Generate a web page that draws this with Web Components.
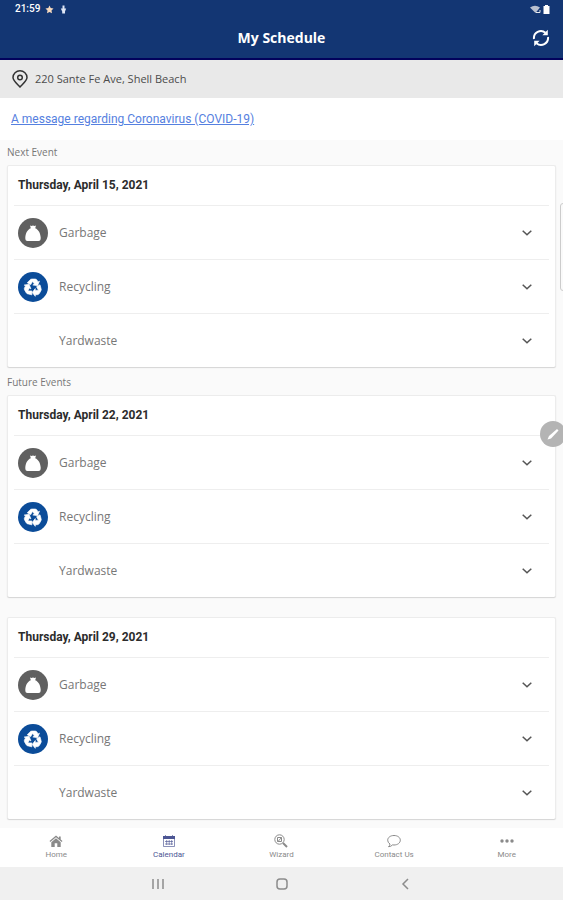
<!DOCTYPE html>
<html lang="en">
<head>
<meta charset="utf-8">
<title>My Schedule</title>
<style>
html,body{margin:0;height:100%}
body{font-family:"Open Sans","Noto Sans",sans-serif;background:#fafafa;color:#777}
</style>
</head>
<body>
<schedule-app></schedule-app>
<script>
const define = (name, html, setup) => customElements.define(name, class extends HTMLElement {
  connectedCallback() {
    if (this.shadowRoot) return;
    const root = this.attachShadow({ mode: 'open' });
    const t = document.createElement('template');
    t.innerHTML = html;
    root.append(t.content.cloneNode(true));
    if (setup) setup.call(this, root);
  }
});

const arrow = 'M11.700 8.200q.8-1.200 2.200-1.200h3.200q1.300 0 2 1.200l1 1.700 1.400-.8-1.800 4.600-4.900-.7 1.600-.9-1.800-2.700-2 3.400-3.400-2z';
const icons = {
  garbage: `<svg viewBox="0 0 30 30"><circle cx="15" cy="15" r="15" fill="#606060"/><path fill="#fff" d="M12 7.600q1.500.7 3 0 1.500.7 3 0l-.8 2.600c3.400 1.300 5.200 5 5.500 9.300q.2 3.500-2.200 3.500h-11q-2.400 0-2.200-3.500c.3-4.300 2.100-8 5.500-9.300z"/></svg>`,
  recycling: `<svg viewBox="0 0 30 30"><circle cx="15" cy="15" r="15" fill="#0b4c99"/><g fill="#fff" stroke="#fff" stroke-width=".6">${[0, 120, 240].map(a => `<path transform="rotate(${a} 15 15.500)" d="${arrow}"/>`).join('')}</g></svg>`,
  home: `<svg viewBox="0 0 14 14"><path fill="currentColor" d="M7 1.500 10 4V2.500h1.700v3L13.500 7l-.8.900L7 3.200 1.300 7.900.5 7zM7 4.300l4.700 3.900V13H8.300V9.300H5.700V13H2.300V8.200z"/></svg>`,
  calendar: `<svg viewBox="0 0 14 14"><path fill="currentColor" d="M1 2h12v3H1z"/><path fill="none" stroke="currentColor" stroke-opacity=".65" d="M1.500 4.500v8h11v-8M3.500 1v2M10.500 1v2M3 7.500h8M3 10h8M4.700 6v5M7.200 6v5M9.700 6v5"/></svg>`,
  wizard: `<svg viewBox="0 0 14 14"><g fill="none" stroke="currentColor"><circle cx="5.500" cy="5.500" r="4.700"/><path d="M3.500 3.500h4v4h-4zM4 7.500l3.500-4"/><path stroke-width="2" d="m9 9 4 4"/></g></svg>`,
  contact: `<svg viewBox="0 0 14 14"><path fill="none" stroke="currentColor" d="M7 1.500c3.600 0 6.300 2 6.300 4.700S10.600 11 7 11l-1.500-.1Q4 12.700 1.500 12.700 3 11.500 3 10 .7 8.700.7 6.200C.7 3.500 3.400 1.500 7 1.500z"/></svg>`,
  more: `<svg viewBox="0 0 14 14"><g fill="currentColor"><circle cx="2" cy="7" r="1.700"/><circle cx="7" cy="7" r="1.700"/><circle cx="12" cy="7" r="1.700"/></g></svg>`
};

define('status-bar', `<style>
:host{display:flex;align-items:center;height:18px;padding:0 13px 0 15px;color:#fff;font:500 10px/18px Roboto,sans-serif}
svg{height:9px;display:block}.star{margin-left:5px}.mic{margin-left:5px}.wifi{margin-left:auto}.bat{margin-left:2px}
</style><span>21:59</span>
<svg class="star" viewBox="0 0 9 9" width="9"><path fill="#f7d9bd" d="m4.500.5 1.200 2.600 2.800.3-2 2 .5 2.900-2.500-1.400L2 8.300l.5-2.900-2-2 2.800-.3z"/></svg>
<svg class="mic" viewBox="0 0 9 9" width="9"><path fill="#dfe6f5" d="M3.500.5h2v3h1.700L6 6.500v2H3.200v-2L1.800 3.500h1.700z"/></svg>
<svg class="wifi" viewBox="0 0 11 9" width="11"><path fill="#b9c0cf" d="M0 2.500Q5-1 10 2.500L5.500 8z"/><path fill="none" stroke="#e5e8ef" d="M6 7.500h4V5"/></svg>
<svg class="bat" viewBox="0 0 7 9" width="7"><path fill="#fff" d="M2 0h3v1h1.500v8h-6V1H2z"/></svg>`);

define('app-header', `<style>
:host{display:block;background:#133673;border-bottom:2px solid #02025c;color:#fff}
.bar{display:grid;grid-template-columns:1fr auto 1fr;align-items:center;height:40px;padding:0 13px}
h1{grid-column:2;margin:0;font-size:14px;line-height:20px;font-weight:700}
button{justify-self:end;display:block;border:0;padding:0;background:none;color:#fff}svg{display:block}
</style><status-bar></status-bar><div class="bar"><h1><slot></slot></h1>
<button aria-label="Refresh"><svg width="18" height="18" viewBox="0 0 18 18"><g fill="none" stroke="#fff" stroke-width="2"><path d="M2 10a7 7 0 0 1 11.500-6.200M16 8A7 7 0 0 1 4.500 14.200"/></g><path fill="#fff" d="M15.800.8v5.400h-5.400zM2.200 17.200v-5.400h5.400z"/></svg></button></div>`);

define('address-bar', `<style>
:host{display:flex;align-items:center;gap:7px;height:38px;padding:0 12px;background:#e9e9e9;color:#4c4c4c;font-size:11px;line-height:16px}
svg{display:block}
</style><svg width="16" height="18" viewBox="0 0 16 18"><g fill="none" stroke="#333" stroke-width="1.500"><path d="M8 17C4 12.800 1 10.500 1 7.500a7 6.700 0 0 1 14 0C15 10.500 12 12.800 8 17z"/><circle cx="8" cy="7.500" r="2.300"/></g></svg><span><slot></slot></span>`);

define('notice-bar', `<style>
:host{display:flex;align-items:center;height:42px;padding:0 11px;background:#fff}
a{color:#5580e0;font:12px/16px Roboto,sans-serif;text-decoration:underline}
</style><a href="#covid"><slot></slot></a>`);

define('event-row', `<style>
:host{display:block;border-top:1px solid #eee;margin:0 6px}
button{width:100%;height:53px;display:grid;grid-template-columns:30px 1fr 10px;gap:11px;align-items:center;border:0;background:none;padding:0 17px 0 4px;color:#777;font:12px/16px "Open Sans",sans-serif;text-align:left}
svg{display:block}i{display:block;width:30px;height:30px}
</style><button aria-expanded="false"><i></i><span><slot></slot></span><svg width="10" height="6" viewBox="0 0 10 6"><path fill="none" stroke="#555" stroke-width="1.500" d="m.7.700 4.300 4.100L9.300.7"/></svg></button>`,
function (root) { root.querySelector('i').innerHTML = icons[this.getAttribute('icon')] || ''; });

define('event-card', `<style>
:host{display:block;background:#fff;border:1px solid #ececec;border-bottom:0;border-radius:2px;box-shadow:0 1px 1px #d4d4d4}
h3{margin:0;padding:0 10px;font:700 12px/39px Roboto,sans-serif;color:#2c2c2c}
</style><h3></h3><event-row icon="garbage">Garbage</event-row><event-row icon="recycling">Recycling</event-row><event-row>Yardwaste</event-row>`,
function (root) { root.querySelector('h3').textContent = this.getAttribute('date'); });

define('event-section', `<style>
:host{display:block}
h2{margin:0;font-size:10px;font-weight:400;line-height:25px;color:#777}
div{display:grid;gap:20px}
</style><h2></h2><div><slot></slot></div>`,
function (root) { root.querySelector('h2').textContent = this.getAttribute('label'); });

define('nav-tab', `<style>
:host{flex:1;display:block;color:#8a8a8a}:host([active]){color:#4d5694}
a{display:grid;justify-items:center;gap:2px;color:inherit;text-decoration:none;font:8px/10px Roboto,sans-serif}
i{display:block;width:14px;height:14px}svg{display:block}
</style><a href="#tab"><i></i><span><slot></slot></span></a>`,
function (root) { root.querySelector('i').innerHTML = icons[this.getAttribute('icon')]; });

define('tab-bar', `<style>:host{display:block;background:#fff}nav{display:flex;padding:6px 0 7px}</style><nav>
<nav-tab icon="home">Home</nav-tab><nav-tab icon="calendar" active>Calendar</nav-tab><nav-tab icon="wizard">Wizard</nav-tab><nav-tab icon="contact">Contact Us</nav-tab><nav-tab icon="more">More</nav-tab></nav>`);

define('system-bar', `<style>
:host{display:flex;justify-content:center;gap:110px;background:#f0f0f0;padding:10px 0 9px}
button{display:block;border:0;padding:0;background:none}svg{display:block}g{fill:none;stroke:#8c8c8c;stroke-width:1.500}
</style><button aria-label="Recent apps"><svg width="14" height="14"><g><path d="M2 2v10M7 2v10M12 2v10"/></g></svg></button>
<button aria-label="Home screen"><svg width="14" height="14"><g><rect x="2" y="2" width="10" height="10" rx="3"/></g></svg></button>
<button aria-label="Back"><svg width="14" height="14"><g><path d="M9 2 4 7l5 5"/></g></svg></button>`);

define('schedule-app', `<style>
:host{display:flex;flex-direction:column;min-height:100vh;position:relative;overflow:hidden}
main{flex:1;display:grid;align-content:start;gap:3px;padding:0 7px 8px}
.handle{position:absolute;right:-5px;top:203px;width:8px;height:88px;box-sizing:border-box;border:1px solid #ccc;border-radius:3px;background:#fafafa}
.edit{position:absolute;right:-3px;top:421px;width:26px;height:26px;border:0;border-radius:50%;padding:0;background:#b4b4b4;display:grid;place-items:center}
</style>
<app-header>My Schedule</app-header>
<address-bar>220 Sante Fe Ave, Shell Beach</address-bar>
<notice-bar>A message regarding Coronavirus (COVID-19)</notice-bar>
<main>
<event-section label="Next Event"><event-card date="Thursday, April 15, 2021"></event-card></event-section>
<event-section label="Future Events"><event-card date="Thursday, April 22, 2021"></event-card><event-card date="Thursday, April 29, 2021"></event-card></event-section>
</main>
<tab-bar></tab-bar><system-bar></system-bar>
<div class="handle"></div>
<button class="edit" aria-label="Edit"><svg width="14" height="14" viewBox="0 0 14 14"><path fill="#fff" d="M1.500 12.500 3 9l8-7 1.500 1.500-7.500 8z"/></svg></button>`);
</script>
</body>
</html>
